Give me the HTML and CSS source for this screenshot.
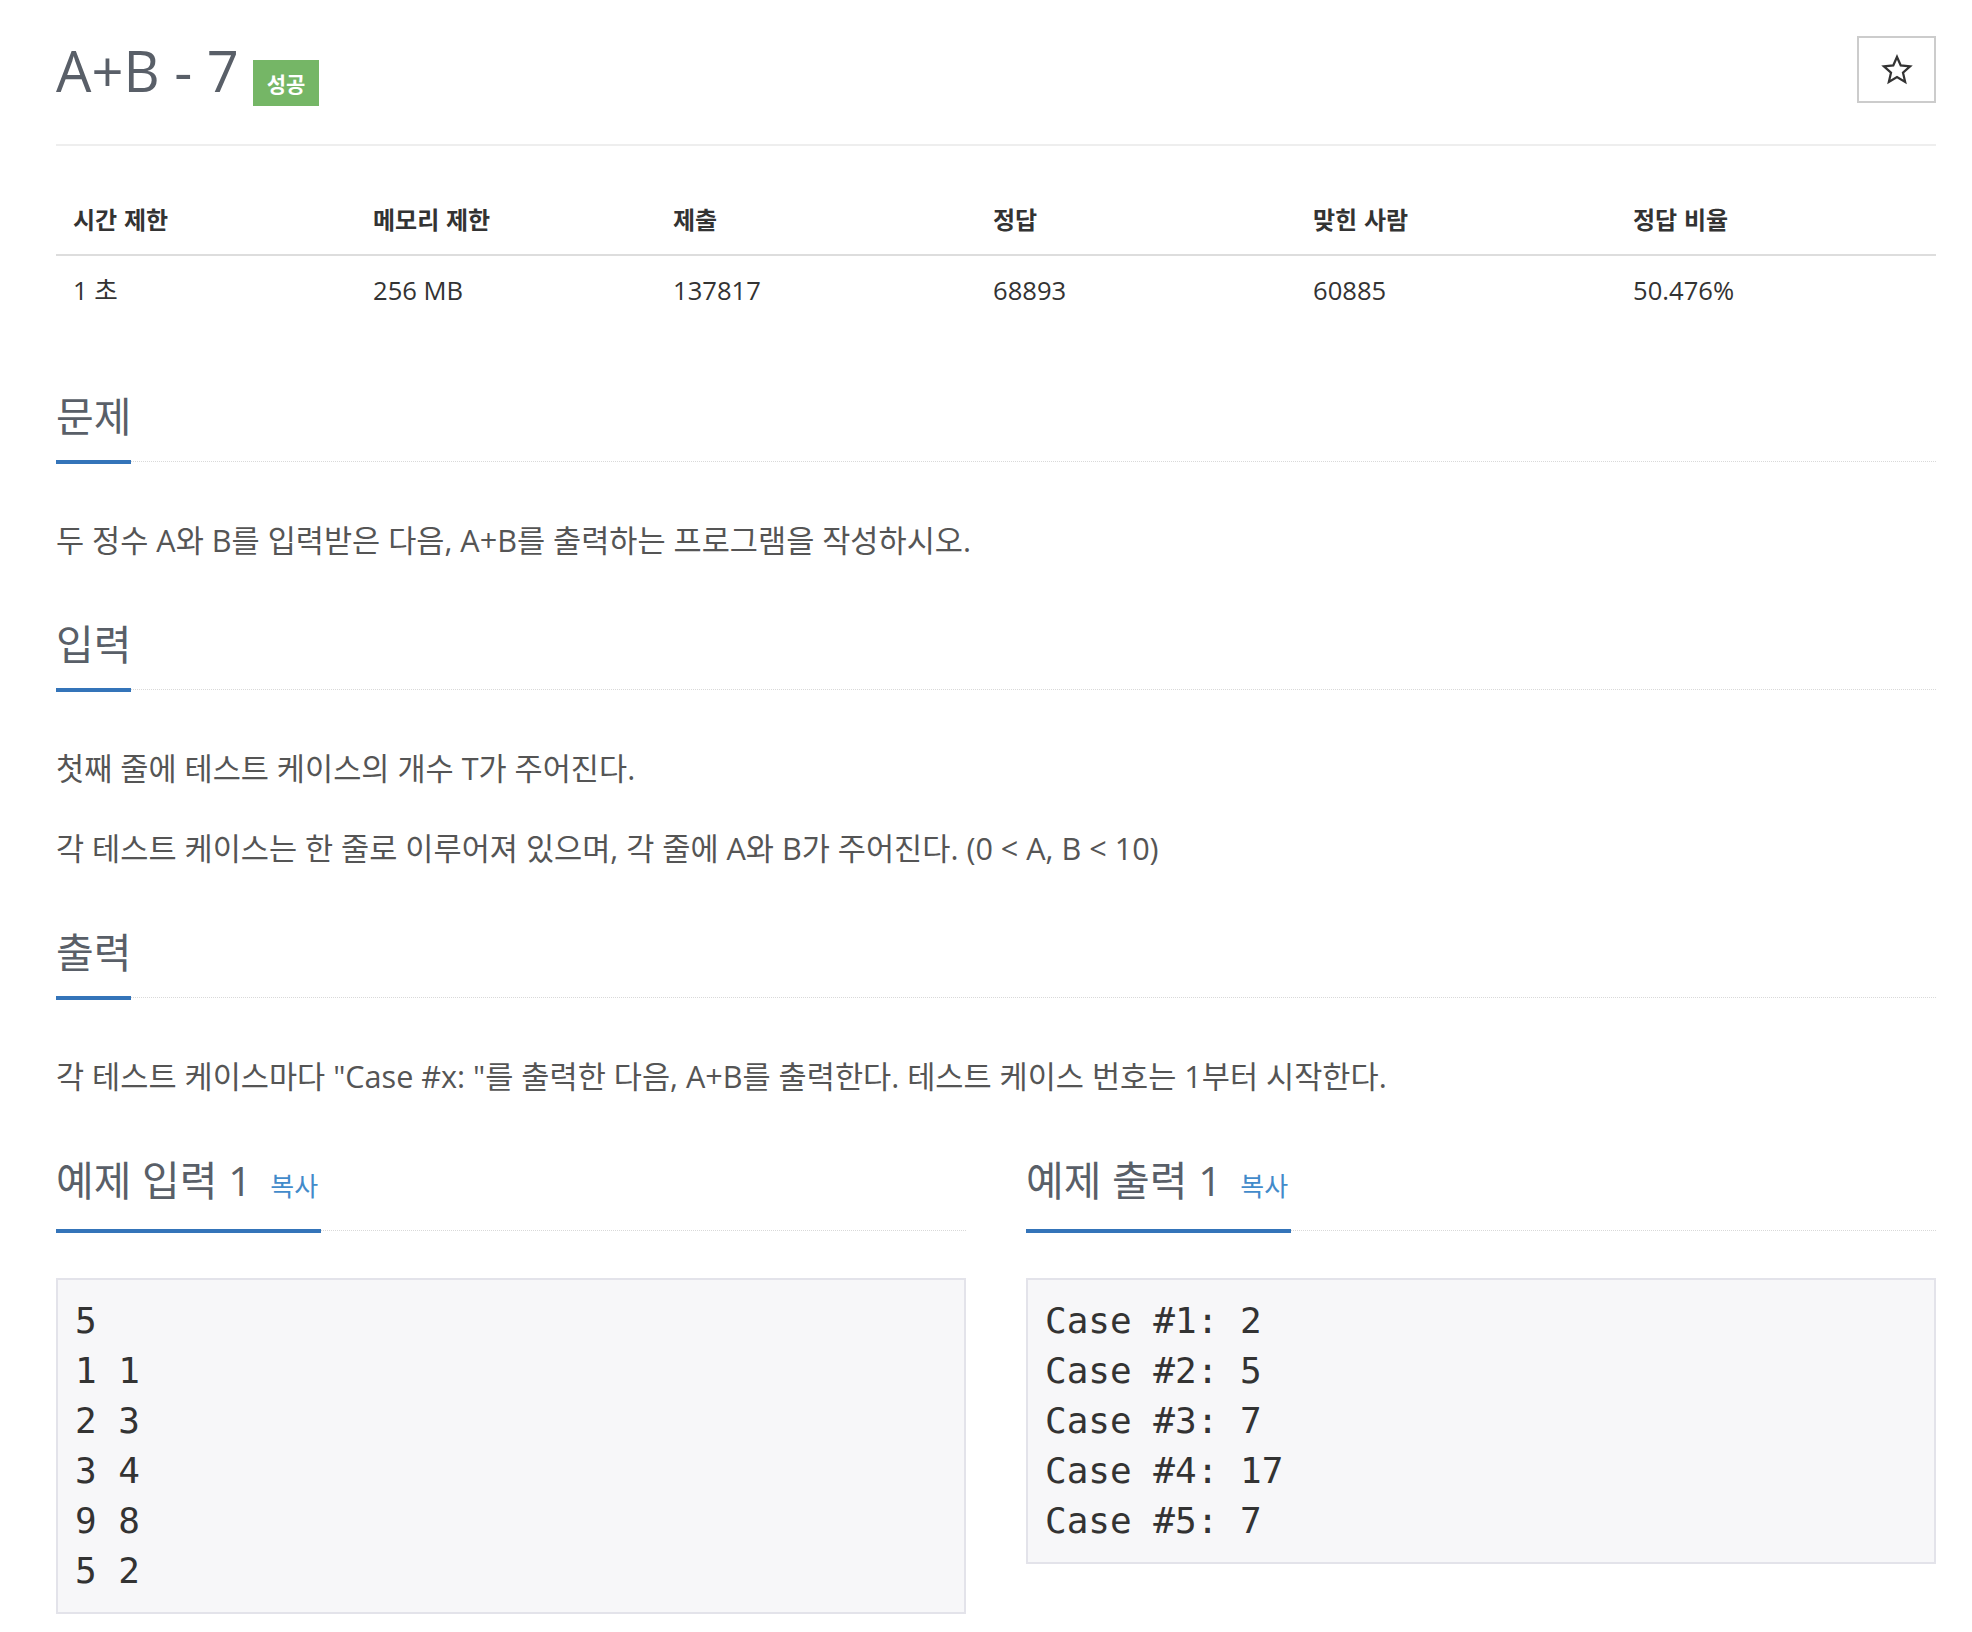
FILE: index.html
```html
<!DOCTYPE html>
<html lang="ko">
<head>
<meta charset="utf-8">
<title>A+B - 7</title>
<link rel="stylesheet" href="styles.css">
</head>
<body>
<div class="page">
  <div class="title-row">
    <h1 class="title"><span class="title-text">A+B - 7</span><span class="badge">성공</span></h1>
    <button class="star-btn" type="button" aria-label="즐겨찾기">
      <svg class="star" width="32" height="32" viewBox="0 0 24 24" aria-hidden="true"><polygon points="12,2.2 14.8,8.6 21.8,9.3 16.5,14 18.1,20.9 12,17.3 5.9,20.9 7.5,14 2.2,9.3 9.2,8.6" fill="none" stroke="#333" stroke-width="1.7" stroke-linejoin="miter"/></svg>
    </button>
  </div>
  <div class="rule"></div>

  <table class="info">
    <colgroup>
      <col class="c-a"><col class="c-a"><col class="c-b"><col class="c-b"><col class="c-b"><col class="c-b">
    </colgroup>
    <thead>
      <tr><th>시간 제한</th><th>메모리 제한</th><th>제출</th><th>정답</th><th>맞힌 사람</th><th>정답 비율</th></tr>
    </thead>
    <tbody>
      <tr><td>1 초</td><td>256 MB</td><td>137817</td><td>68893</td><td>60885</td><td>50.476%</td></tr>
    </tbody>
  </table>

  <section class="section first">
    <div class="headline"><h2>문제</h2></div>
    <p>두 정수 A와 B를 입력받은 다음, A+B를 출력하는 프로그램을 작성하시오.</p>
  </section>

  <section class="section">
    <div class="headline"><h2>입력</h2></div>
    <p>첫째 줄에 테스트 케이스의 개수 T가 주어진다.</p>
    <p>각 테스트 케이스는 한 줄로 이루어져 있으며, 각 줄에 A와 B가 주어진다. (0 &lt; A, B &lt; 10)</p>
  </section>

  <section class="section">
    <div class="headline"><h2>출력</h2></div>
    <p>각 테스트 케이스마다 "Case #x: "를 출력한 다음, A+B를 출력한다. 테스트 케이스 번호는 1부터 시작한다.</p>
  </section>

  <div class="samples">
    <div class="sample">
      <div class="headline sample-head"><h2>예제 입력 1 <span class="copy">복사</span></h2></div>
      <pre class="sampledata">5
1 1
2 3
3 4
9 8
5 2</pre>
    </div>
    <div class="sample">
      <div class="headline sample-head"><h2>예제 출력 1 <span class="copy">복사</span></h2></div>
      <pre class="sampledata">Case #1: 2
Case #2: 5
Case #3: 7
Case #4: 17
Case #5: 7</pre>
    </div>
  </div>
</div>
</body>
</html>
```

FILE: styles.css
```css
html, body {
  margin: 0;
  padding: 0;
  background: #ffffff;
}

body {
  font-family: "Open Sans", "Noto Sans CJK KR", sans-serif;
  color: #555555;
}

.page {
  padding: 31px 36px 0 56px;
}

.title-row {
  display: flex;
  justify-content: space-between;
  align-items: flex-start;
}

.title {
  display: flex;
  align-items: flex-start;
  margin: 0;
  font-size: 56px;
  font-weight: 400;
  line-height: 78px;
  color: #595f68;
}

.badge {
  margin: 29px 0 0 14px;
  height: 46px;
  padding: 0 14px;
  background: #75b666;
  color: #ffffff;
  font-family: "Noto Sans CJK KR", sans-serif;
  font-size: 21px;
  font-weight: 700;
  line-height: 46px;
}

.star-btn {
  margin-top: 5px;
  width: 79px;
  height: 67px;
  box-sizing: border-box;
  border: 2px solid #cccccc;
  background: #ffffff;
  padding: 0;
  display: flex;
  align-items: center;
  justify-content: center;
}

.star {
  display: block;
}

.rule {
  height: 2px;
  background: #eeeeee;
  margin-top: 35px;
}

.info {
  margin-top: 44px;
  width: 100%;
  border-collapse: collapse;
  table-layout: fixed;
}

.c-a { width: 300px; }
.c-b { width: 320px; }

.info th {
  text-align: left;
  font-family: "Noto Sans CJK KR", sans-serif;
  font-size: 24px;
  font-weight: 700;
  line-height: 32px;
  padding: 13px 17px 19px 17px;
  border-bottom: 2px solid #dddddd;
  color: #333333;
}

.info td {
  font-size: 25.6px;
  line-height: 36px;
  padding: 17px 17px 15px 17px;
  color: #333333;
}

.section {
  display: flex;
  flex-direction: column;
  margin-top: 56px;
}

.section.first {
  margin-top: 68px;
}

.headline {
  display: flex;
  border-bottom: 1px dotted #d9d9d9;
  margin-bottom: 54px;
}

.headline h2 {
  margin: 0 0 -3px 0;
  padding-bottom: 20px;
  border-bottom: 4px solid #3474b9;
  font-size: 41px;
  font-weight: 400;
  line-height: 48px;
  color: #595f68;
}

.section p {
  margin: 0 0 32px 0;
  font-size: 30.6px;
  line-height: 48px;
  color: #555555;
}

.section p:last-child {
  margin-bottom: 0;
}

.samples {
  display: grid;
  grid-template-columns: 1fr 1fr;
  column-gap: 60px;
  align-items: start;
  margin-top: 56px;
}

.sample-head {
  margin-bottom: 47px;
}

.copy {
  margin-left: 8px;
  padding-right: 3px;
  font-family: "Noto Sans CJK KR", sans-serif;
  font-size: 26px;
  color: #428bca;
}

.sampledata {
  margin: 0;
  padding: 16px 17px;
  border: 2px solid #e3e3ea;
  background: #f7f7f9;
  font-family: "DejaVu Sans Mono", monospace;
  font-size: 36px;
  line-height: 50px;
  color: #333333;
}
```
